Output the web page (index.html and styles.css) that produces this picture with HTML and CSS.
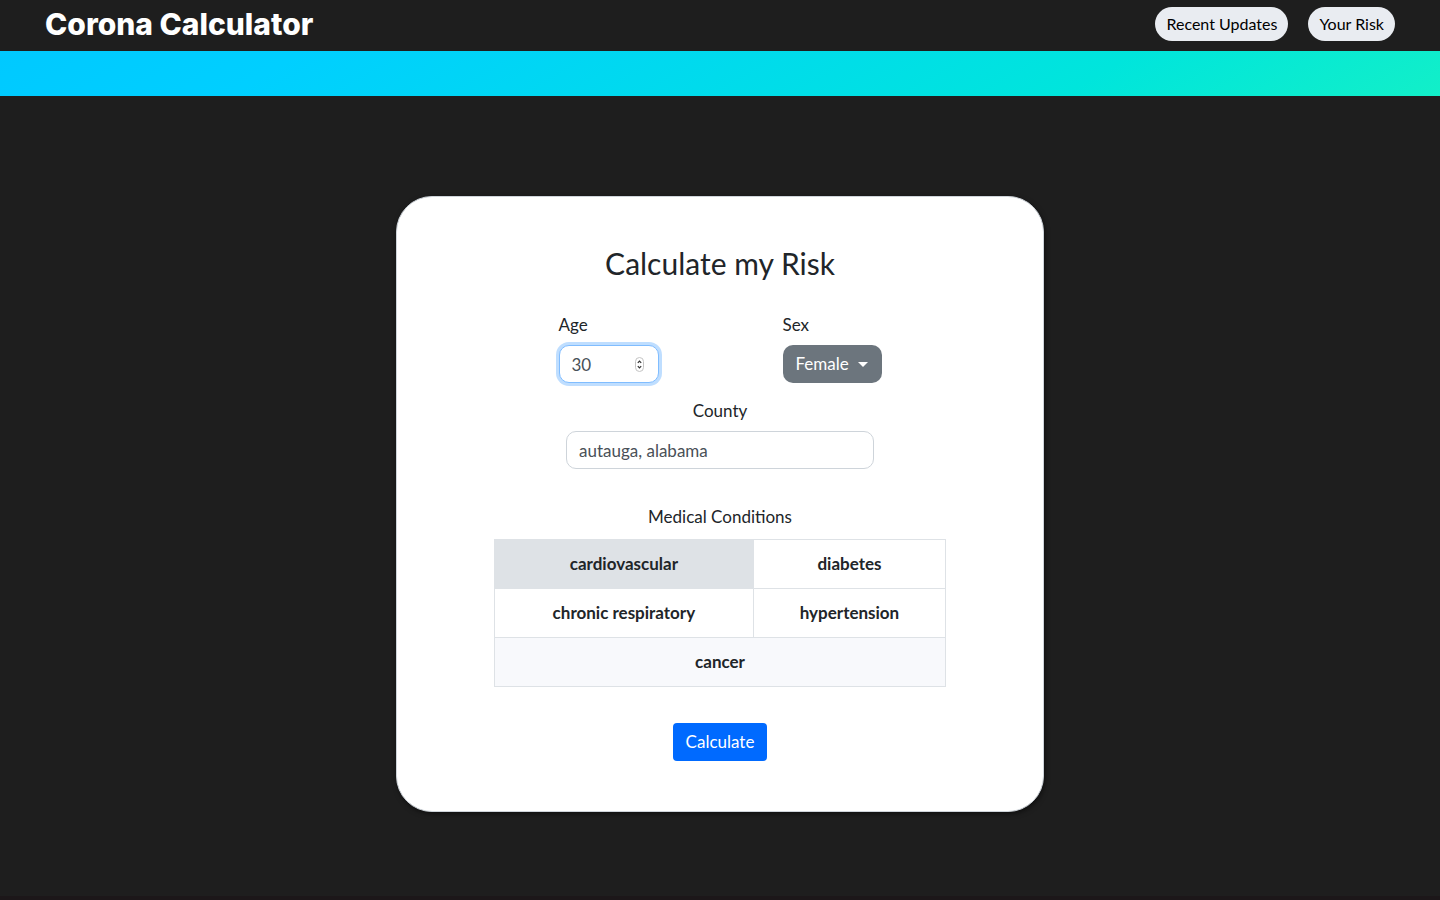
FILE: index.html
```html
<!DOCTYPE html>
<html lang="en">
<head>
<meta charset="utf-8">
<meta name="viewport" content="width=device-width, initial-scale=1">
<title>Corona Calculator</title>
<link rel="stylesheet" href="styles.css">
</head>
<body>
<header class="topbar">
  <h1 class="brand">Corona Calculator</h1>
  <nav class="nav">
    <a class="pill" href="#updates">Recent Updates</a>
    <a class="pill" href="#risk">Your Risk</a>
  </nav>
</header>
<div class="band"></div>
<main class="main">
  <form class="card">
    <h2 class="title">Calculate my Risk</h2>
    <div class="row">
      <div class="field">
        <label for="age">Age</label>
        <div class="age">
          <input class="input age-input" id="age" type="number" value="30">
          <svg class="spinner" viewBox="0 0 9 15" width="9" height="15" aria-hidden="true">
            <rect x="0.5" y="0.5" width="8" height="14" rx="4" fill="#fff" stroke="#c4c4c4"/>
            <path d="M2.8 5.8 4.5 4l1.7 1.8M2.8 9.2 4.5 11l1.7-1.8" fill="none" stroke="#333" stroke-width="1.2"/>
          </svg>
        </div>
      </div>
      <div class="field">
        <label for="sex">Sex</label>
        <div class="sex">
          <select class="select" id="sex"><option>Female</option><option>Male</option></select>
        </div>
      </div>
    </div>
    <div class="field county">
      <label for="county">County</label>
      <input class="input" id="county" type="text" value="autauga, alabama">
    </div>
    <table class="conditions">
      <caption>Medical Conditions</caption>
      <colgroup><col class="col-wide"><col class="col-narrow"></colgroup>
      <tbody>
        <tr>
          <td><button class="cell selected" type="button" aria-pressed="true">cardiovascular</button></td>
          <td><button class="cell" type="button" aria-pressed="false">diabetes</button></td>
        </tr>
        <tr>
          <td><button class="cell" type="button" aria-pressed="false">chronic respiratory</button></td>
          <td><button class="cell" type="button" aria-pressed="false">hypertension</button></td>
        </tr>
        <tr>
          <td colspan="2"><button class="cell hovered" type="button" aria-pressed="false">cancer</button></td>
        </tr>
      </tbody>
    </table>
    <button class="submit" type="submit">Calculate</button>
  </form>
</main>
<footer class="footer"></footer>
</body>
</html>
```
FILE: styles.css
```css
* { box-sizing: border-box; }
body {
  margin: 0;
  min-height: 100vh;
  display: flex;
  flex-direction: column;
  background: #1e1e1e;
  color: #212529;
  font: 17px/24px Lato, "Open Sans", sans-serif;
}
input, select, button { font: inherit; }
.topbar {
  display: flex;
  align-items: center;
  justify-content: space-between;
  padding: 7px 45px 10px;
}
.brand {
  margin: 0;
  color: #fff;
  font: 800 30px/34px Inter, sans-serif;
}
.nav { display: flex; gap: 20px; }
.pill {
  padding: 5px 11px;
  border-radius: 17px;
  background: #e9ecf1;
  color: #000;
  font-size: 16px;
  text-decoration: none;
}
.band {
  height: 45px;
  background: linear-gradient(150deg, #00c9ff 0%, #00cfff 20%, #00e5dc 75%, #12efc8 100%);
}
.main {
  flex: 1;
  display: flex;
  justify-content: center;
  align-items: flex-start;
  padding: 100px 0 84px;
}
.card {
  width: 45%;
  min-width: 480px;
  display: flex;
  flex-direction: column;
  align-items: center;
  padding: 48px 0 50px;
  border: 1px solid #ced4da;
  border-radius: 36px;
  background: #fff;
  box-shadow: 1px 2px 5px rgba(0, 0, 0, 0.5);
}
.title {
  margin: 0 0 32px;
  font-size: 30px;
  font-weight: 400;
  line-height: 36px;
}
.row {
  display: flex;
  justify-content: space-between;
  width: 50%;
  margin-bottom: 16px;
}
.field {
  display: flex;
  flex-direction: column;
  gap: 8px;
}
.input {
  width: 100%;
  height: 38px;
  padding: 6px 12px;
  border: 1px solid #ced4da;
  border-radius: 10px;
  background: #fff;
  color: #495057;
}
.age, .sex {
  display: grid;
  align-items: center;
}
.age { width: 100px; }
.age > *, .sex > *, .sex::after { grid-area: 1 / 1; }
.age-input {
  appearance: textfield;
  border-color: #80bdff;
  outline: none;
  box-shadow: 0 0 0 3px #bfdeff;
}
.age-input::-webkit-inner-spin-button { appearance: none; }
.spinner {
  justify-self: end;
  margin-right: 15px;
}
.sex { width: 99px; }
.select {
  width: 100%;
  height: 38px;
  padding: 6px 13px;
  appearance: none;
  border: 0;
  border-radius: 10px;
  background: #6c757d;
  color: #fff;
}
.sex::after {
  content: "";
  justify-self: end;
  margin-right: 14px;
  border: 5px solid transparent;
  border-top-color: #fff;
  border-bottom: 0;
  pointer-events: none;
}
.county {
  width: 308px;
  text-align: center;
  margin-bottom: 36px;
}
.conditions {
  width: 70%;
  margin-bottom: 36px;
  border-collapse: collapse;
  table-layout: fixed;
}
.conditions caption { padding-bottom: 10px; }
.col-wide { width: 57.4%; }
.col-narrow { width: 42.6%; }
.conditions td {
  padding: 0;
  border: 1px solid #dee2e6;
}
.cell {
  display: block;
  width: 100%;
  padding: 12px;
  border: 0;
  background: #fff;
  color: #212529;
  font-weight: 700;
}
.selected { background: #dee2e6; }
.hovered { background: #f8f9fc; }
.submit {
  padding: 7px 13px;
  border: 0;
  border-radius: 4px;
  background: #006aff;
  color: #fff;
}
.footer {
  height: 4px;
  background: #1c1719;
}
```
